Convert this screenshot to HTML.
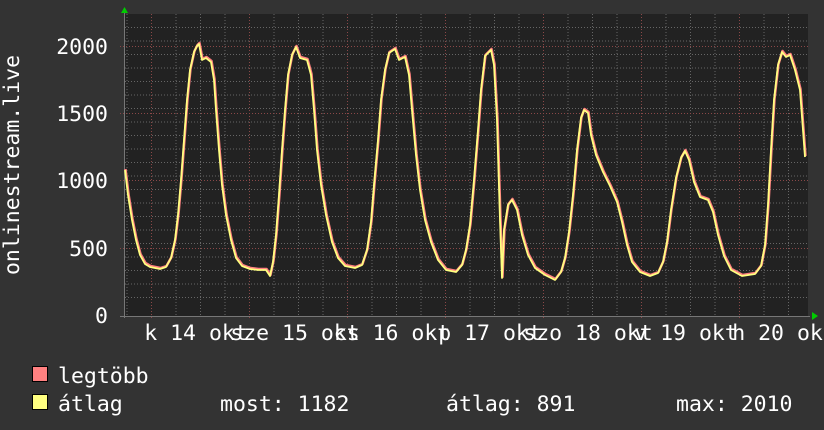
<!DOCTYPE html>
<html><head><meta charset="utf-8"><style>
html,body{margin:0;padding:0;background:#333;}
svg{display:block}
text{font-family:"DejaVu Sans Mono","Liberation Mono",monospace;fill:#fff;}
</style></head><body>
<svg width="824" height="430" xmlns="http://www.w3.org/2000/svg">
<rect width="824" height="430" fill="#333"/>
<rect x="124" y="14" width="684" height="302" fill="#222"/>
<g stroke="#666" stroke-width="1" stroke-dasharray="1,2">
<path d="M125 27.5H808M125 41H808M125 54.5H808M125 68H808M125 81.5H808M125 95H808M125 108.5H808M125 122H808M125 135.5H808M125 149H808M125 162.5H808M125 176H808M125 189.5H808M125 203H808M125 216.5H808M125 230H808M125 243.5H808M125 257H808M125 270.5H808M125 284H808M125 297.5H808"/>
<path d="M127 14V316M151.5 14V316M176 14V316M200.5 14V316M225 14V316M249.5 14V316M274 14V316M298.5 14V316M323 14V316M347.5 14V316M372 14V316M396.5 14V316M421 14V316M445.5 14V316M470 14V316M494.5 14V316M519 14V316M543.5 14V316M568 14V316M592.5 14V316M617 14V316M641.5 14V316M666 14V316M690.5 14V316M715 14V316M739.5 14V316M764 14V316M788.5 14V316"/>
</g>
<g stroke="#8a4848" stroke-width="1" stroke-dasharray="1,2">
<path d="M120 46.5H808M120 113.5H808M120 180.5H808M120 248.5H808"/>
<path d="M151.5 14V320M249.5 14V320M347.5 14V320M445.5 14V320M543.5 14V320M641.5 14V320M739.5 14V320"/>
</g>
<path d="M120 316.5H810" stroke="#777" stroke-width="1"/>
<path d="M124.5 12V318" stroke="#777" stroke-width="1"/>
<polygon points="121,13 128,13 124.5,7" fill="#0c0"/>
<polygon points="812,312 812,320 818,316" fill="#0c0"/>
<g fill="none" stroke-linejoin="round">
<polyline stroke="#ff8080" stroke-width="2.5" transform="translate(0.5,-1)" points="125,170 128,195 132,220 136,240 140,255 145,264 150,267 160,269 166,267 171,258 175,240 178,215 181,180 184,140 187,100 190,70 194,52 197,46 199,44 202,60 206,58 211,62 214,80 216,110 219,150 222,185 226,215 231,240 236,258 242,266 250,269 258,270 266,270 270,276 273,262 276,235 279,195 282,150 285,110 288,75 292,55 296,47 300,58 307,60 311,75 314,110 317,150 321,185 326,215 332,242 338,258 345,266 355,268 362,265 367,250 371,222 374,185 378,140 381,100 385,70 389,53 395,49 399,60 405,57 409,75 412,110 416,155 420,190 425,220 431,242 438,260 446,270 456,272 462,265 466,250 470,225 474,180 478,130 481,90 485,56 491,50 494,65 497,120 500,220 502,278 504,230 508,205 512,200 517,210 522,235 528,255 535,268 545,275 555,280 561,272 565,258 569,232 573,195 577,150 581,118 584,110 588,113 591,135 596,155 603,172 610,186 617,202 622,222 627,245 632,262 640,272 650,276 658,273 663,262 667,242 671,210 676,178 681,158 685,151 689,160 694,182 700,197 708,200 713,212 718,235 724,256 731,270 742,276 755,274 761,266 765,245 768,205 771,150 774,100 778,65 782,52 786,57 790,55 795,70 800,90 803,130 805,157"/>
<polyline stroke="#ffff80" stroke-width="1.8" points="125,170 128,195 132,220 136,240 140,255 145,264 150,267 160,269 166,267 171,258 175,240 178,215 181,180 184,140 187,100 190,70 194,52 197,46 199,44 202,60 206,58 211,62 214,80 216,110 219,150 222,185 226,215 231,240 236,258 242,266 250,269 258,270 266,270 270,276 273,262 276,235 279,195 282,150 285,110 288,75 292,55 296,47 300,58 307,60 311,75 314,110 317,150 321,185 326,215 332,242 338,258 345,266 355,268 362,265 367,250 371,222 374,185 378,140 381,100 385,70 389,53 395,49 399,60 405,57 409,75 412,110 416,155 420,190 425,220 431,242 438,260 446,270 456,272 462,265 466,250 470,225 474,180 478,130 481,90 485,56 491,50 494,65 497,120 500,220 502,278 504,230 508,205 512,200 517,210 522,235 528,255 535,268 545,275 555,280 561,272 565,258 569,232 573,195 577,150 581,118 584,110 588,113 591,135 596,155 603,172 610,186 617,202 622,222 627,245 632,262 640,272 650,276 658,273 663,262 667,242 671,210 676,178 681,158 685,151 689,160 694,182 700,197 708,200 713,212 718,235 724,256 731,270 742,276 755,274 761,266 765,245 768,205 771,150 774,100 778,65 782,52 786,57 790,55 795,70 800,90 803,130 805,157"/>
</g>
<g font-size="21.5" text-anchor="end">
<text x="108" y="54">2000</text>
<text x="108" y="121">1500</text>
<text x="108" y="188">1000</text>
<text x="108" y="256">500</text>
<text x="108" y="323">0</text>
</g>
<text font-size="21.5" text-anchor="middle" transform="translate(19,165) rotate(-90)">onlinestream.live</text>
<g font-size="21.5" text-anchor="middle">
<text x="196" y="340">k 14 okt</text>
<text x="295" y="340">sze 15 okt</text>
<text x="392" y="340">cs 16 okt</text>
<text x="490" y="340">p 17 okt</text>
<text x="588" y="340">szo 18 okt</text>
<text x="686" y="340">v 19 okt</text>
<text x="784" y="340">h 20 okt</text>
</g>
<rect x="32.5" y="366.5" width="15" height="15" fill="#ff8080" stroke="#000"/>
<rect x="32.5" y="394.5" width="15" height="15" fill="#ffff80" stroke="#000"/>
<g font-size="21.5">
<text x="58" y="383">legtöbb</text>
<text x="58" y="411">átlag</text>
<text x="220" y="411">most: 1182</text>
<text x="446" y="411">átlag: 891</text>
<text x="676" y="411">max: 2010</text>
</g>
</svg>
</body></html>
